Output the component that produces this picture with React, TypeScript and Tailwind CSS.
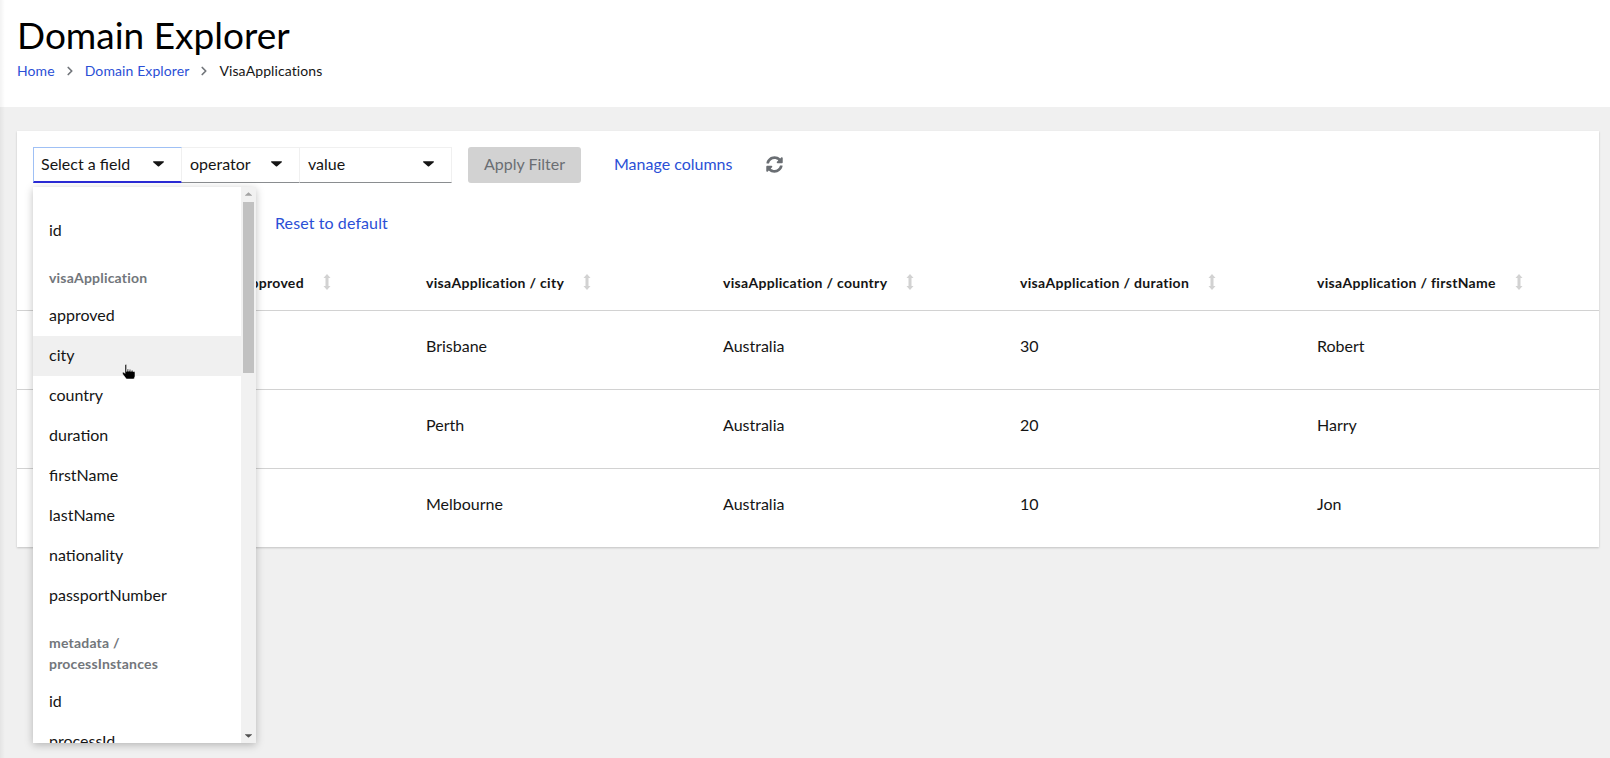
import { ChevronRight } from "lucide-react";

const columns = [
  { title: "visaApplication / approved", width: "w-[297px]" },
  { title: "visaApplication / city", width: "w-[297px]" },
  { title: "visaApplication / country", width: "w-[297px]" },
  { title: "visaApplication / duration", width: "w-[297px]" },
  { title: "visaApplication / firstName", width: "flex-1" },
];

const rows = [
  ["true", "Brisbane", "Australia", "30", "Robert"],
  ["true", "Perth", "Australia", "20", "Harry"],
  ["false", "Melbourne", "Australia", "10", "Jon"],
];

const items = ["approved", "city", "country", "duration", "firstName", "lastName", "nationality", "passportNumber"];

function Caret({ className }: { className?: string }) {
  return (
    <svg viewBox="0 0 12 6" className={className} fill="currentColor">
      <path d="M0.6 0h10.8c.5 0 .8.6.4 1L6.4 5.7c-.2.2-.6.2-.8 0L.2 1C-.2.6.1 0 .6 0z" />
    </svg>
  );
}

function SortIcon() {
  return (
    <svg viewBox="0 0 8 16" className="w-[8px] h-[16px] text-[#d2d2d2]" fill="currentColor">
      <path d="M4 0 7.5 4H5.5v8h2L4 16 .5 12h2V4h-2z" />
    </svg>
  );
}

function Select({ label, width, active }: { label: string; width: string; active?: boolean }) {
  return (
    <div
      className={`${width} h-[36px] flex items-center justify-between pr-[8px] pb-[2px] border-t border-r border-[#f0f0f0] ${
        active
          ? "pl-[7px] border-b-2 border-b-[#2b2bd6] border-t-[#9fc0f5] border-l border-l-[#9fc0f5] border-r-[#f0f0f0]"
          : "pl-[8px] border-b border-b-[#8a8d90]"
      }`}
    >
      <span className="text-[16px] text-[#151515]">{label}</span>
      <Caret className="w-[11px] h-[6px] mr-[9px] text-[#151515]" />
    </div>
  );
}

function MenuItem({ label, hover }: { label: string; hover?: boolean }) {
  return (
    <div className={`h-[40px] flex items-center pl-[16px] pb-[2px] text-[16px] text-[#151515] ${hover ? "bg-[#f0f0f0]" : ""}`}>
      {label}
    </div>
  );
}

function HandCursor() {
  return (
    <svg viewBox="0 0 15 16" className="absolute left-[89px] top-[177px] w-[15px] h-[16px]">
      <path
        d="M3 .5h1.6v7l.6-.2V5h1.4v2.3l.7-.1V5.6h1.4v1.8l.7-.1V6.3h1.4v1.2h1.2c.6 0 1 .5 1 1v3.8l-1 2.7H4.4L.6 10V8.2h1.2L3 9.4z"
        fill="#000"
        stroke="#fff"
        strokeWidth="0.5"
      />
    </svg>
  );
}

export default function App() {
  return (
    <div className="relative w-full h-[758px] bg-[#f0f0f0] overflow-hidden font-['Lato','Liberation_Sans',sans-serif]">
      <header className="h-[107px] bg-white pt-[13px] pl-[17px]">
        <h1 className="text-[37px] leading-[44px] text-[#000]">Domain Explorer</h1>
        <nav className="flex items-center text-[14px] leading-[20px] mt-[4px] tracking-[0.1px]">
          <span className="text-[#2b4fd6]">Home</span>
          <ChevronRight className="w-[14px] h-[14px] mx-[8px] text-[#72767b]" strokeWidth={3} />
          <span className="text-[#2b4fd6]">Domain Explorer</span>
          <ChevronRight className="w-[14px] h-[14px] mx-[8px] text-[#72767b]" strokeWidth={3} />
          <span className="text-[#151515]">VisaApplications</span>
        </nav>
      </header>

      <main className="relative ml-[17px] mr-[11px] mt-[24px] h-[416px] bg-white shadow-[0_1px_2px_rgba(0,0,0,0.2)]">
        <div className="flex items-center pt-[16px] pl-[16px]">
          <Select label="Select a field" width="w-[149px]" active />
          <Select label="operator" width="w-[118px]" />
          <Select label="value" width="w-[152px]" />
          <button className="ml-[16px] w-[113px] h-[36px] pb-[2px] rounded-[3px] bg-[#d2d2d2] text-[16px] text-[#6a6e73]">Apply Filter</button>
          <span className="ml-[33px] mb-[2px] w-[119px] text-[16px] text-[#2b4fd6] whitespace-nowrap">Manage columns</span>
          <svg viewBox="0 0 512 512" className="ml-[33px] mb-[2px] w-[17px] h-[17px] text-[#6a6e73]" fill="currentColor">
            <path d="M370.72 133.28C339.458 104.008 298.888 87.962 255.848 88c-77.458.068-144.328 53.178-162.791 126.85-1.344 5.363-6.122 9.15-11.651 9.15H24.103c-7.498 0-13.194-6.807-11.807-14.176C33.933 94.924 134.813 8 256 8c66.448 0 126.791 26.136 171.315 68.685L463.03 40.97C478.149 25.851 504 36.559 504 57.941V192c0 13.255-10.745 24-24 24H345.941c-21.382 0-32.09-25.851-16.971-40.971l41.75-41.749zM32 296h134.059c21.382 0 32.09 25.851 16.971 40.971l-41.75 41.75c31.262 29.273 71.835 45.319 114.876 45.28 77.418-.07 144.315-53.144 162.787-126.849 1.344-5.363 6.122-9.15 11.651-9.15h57.304c7.498 0 13.194 6.807 11.807 14.176C478.067 417.076 377.187 504 256 504c-66.448 0-126.791-26.136-171.315-68.685L48.97 471.03C33.851 486.149 8 475.441 8 454.059V320c0-13.255 10.745-24 24-24z" />
          </svg>
        </div>

        <div className="h-[40px] mt-[20px] pl-[258px] flex items-center">
          <span className="text-[16px] tracking-[0.1px] text-[#2b4fd6]">Reset to default</span>
        </div>

        <div className="mt-[11px] h-[57px] flex items-center pl-[112px] border-b border-[#d2d2d2]">
          {columns.map((col) => (
            <div key={col.title} className={`${col.width} flex items-center gap-[19px] text-[14px] tracking-[0.3px] font-bold text-[#151515]`}>
              <span>{col.title}</span>
              <SortIcon />
            </div>
          ))}
        </div>
        {rows.map((row, i) => (
          <div key={i} className={`h-[79px] flex items-center pl-[112px] pb-[8px] border-b ${i < 2 ? "border-[#d2d2d2]" : "border-transparent"}`}>
            {row.map((cell, j) => (
              <div key={j} className={`${columns[j].width} text-[16px] text-[#151515]`}>
                {cell}
              </div>
            ))}
          </div>
        ))}

        {/* field dropdown */}
        <div className="absolute left-[16px] top-[56px] w-[223px] h-[556px] flex bg-white shadow-[0_2px_8px_rgba(0,0,0,0.25)] overflow-hidden">
          <div className="w-[208px] overflow-hidden">
            <div className="pt-[24px]">
              <MenuItem label="id" />
              <div className="pt-[17px] pb-[8px] pl-[16px] text-[14px] tracking-[0.2px] leading-[20px] font-bold text-[#72767b]">visaApplication</div>
              {items.map((item) => (
                <MenuItem key={item} label={item} hover={item === "city"} />
              ))}
              <div className="pt-[16px] pb-[8px] pl-[16px] pr-[60px] text-[14px] tracking-[0.2px] leading-[21px] font-bold text-[#72767b]">
                metadata / processInstances
              </div>
              <MenuItem label="id" />
              <MenuItem label="processId" />
            </div>
          </div>
          <div className="flex-1 bg-[#f1f1f1] flex flex-col items-center relative">
            <Caret className="w-[7px] h-[4px] mt-[5px] rotate-180 text-[#a3a3a3]" />
            <div className="w-[11px] h-[171px] mt-[6px] bg-[#c1c1c1]" />
            <Caret className="absolute bottom-[5px] w-[7px] h-[4px] text-[#505050]" />
          </div>
          <HandCursor />
        </div>
      </main>

      {/* faint shadow from the collapsed sidebar */}
      <div className="absolute left-0 top-0 h-full w-[5px] bg-gradient-to-r from-black/5 to-transparent" />
    </div>
  );
}
